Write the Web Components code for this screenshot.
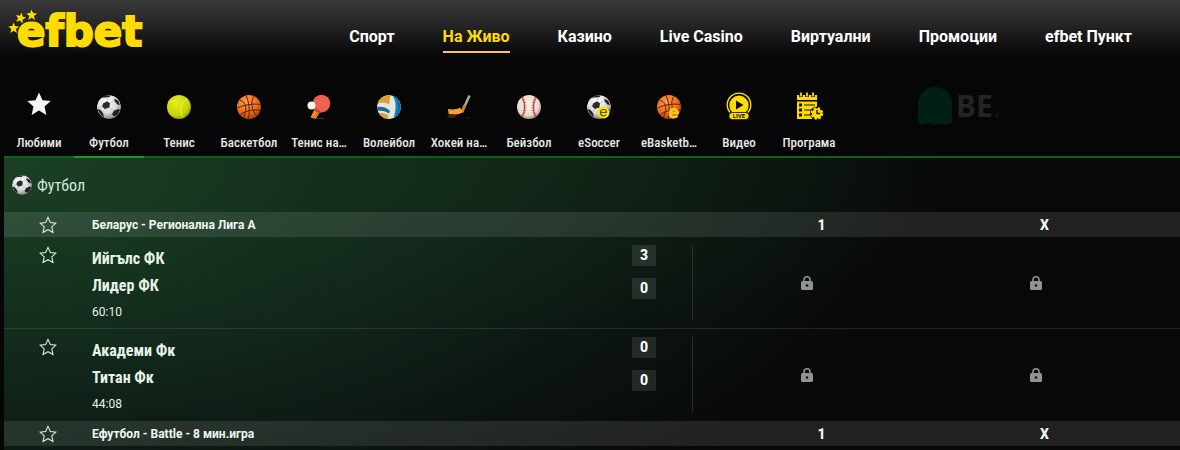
<!DOCTYPE html>
<html lang="bg">
<head>
<meta charset="utf-8">
<meta name="viewport" content="width=device-width, initial-scale=1">
<title>efbet - На Живо</title>
<style>
  html, body {
    height: 100%;
  }
  body {
    margin: 0;
    background: #060606;
    color: #f2f2f2;
    font-family: "Roboto Condensed", Roboto, "Liberation Sans", sans-serif;
    --wide: Roboto, "Liberation Sans", sans-serif;
    --brand: #ffdc00;
    --line: #0c5f1d;
  }
</style>
</head>
<body>

<live-page>
  <site-header slot="header">
    <brand-logo></brand-logo>
    <nav-link href="#sport">Спорт</nav-link>
    <nav-link href="#live" active>На Живо</nav-link>
    <nav-link href="#casino">Казино</nav-link>
    <nav-link href="#live-casino">Live Casino</nav-link>
    <nav-link href="#virtual">Виртуални</nav-link>
    <nav-link href="#promo">Промоции</nav-link>
    <nav-link href="#punkt">efbet Пункт</nav-link>
  </site-header>

  <sports-bar slot="sports">
    <sport-tab icon="star">Любими</sport-tab>
    <sport-tab icon="soccer" active>Футбол</sport-tab>
    <sport-tab icon="tennis">Тенис</sport-tab>
    <sport-tab icon="basketball">Баскетбол</sport-tab>
    <sport-tab icon="tabletennis">Тенис на…</sport-tab>
    <sport-tab icon="volleyball">Волейбол</sport-tab>
    <sport-tab icon="hockey">Хокей на…</sport-tab>
    <sport-tab icon="baseball">Бейзбол</sport-tab>
    <sport-tab icon="esoccer">eSoccer</sport-tab>
    <sport-tab icon="ebasketball">eBasketb…</sport-tab>
    <sport-tab icon="video">Видео</sport-tab>
    <sport-tab icon="schedule">Програма</sport-tab>
    <partner-mark slot="partner">BE</partner-mark>
  </sports-bar>

  <section-title icon="soccer">Футбол</section-title>
  <match-table></match-table>
</live-page>

<script>
const STAR = 'M12 1.8l3.1 6.9 7.4.8-5.5 5.1 1.6 7.4L12 18.3 5.4 22 7 14.6 1.5 9.5l7.4-.8z';

const SOCCER = `
  <radialGradient id="white" cx=".4" cy=".3" r=".75">
    <stop offset="0" stop-color="#fff"/><stop offset=".6" stop-color="#d9d9d9"/><stop offset="1" stop-color="#777"/>
  </radialGradient>
  <clipPath id="round"><circle cx="12" cy="12" r="12"/></clipPath>
  <g clip-path="url(#round)">
    <circle cx="12" cy="12" r="12" fill="url(#white)"/>
    <path d="M6 8.5l4-2.3 3 2-.6 4.4-4.6 1.4-2.6-2.6z" fill="#2b2b2b"/>
    <path d="M17.5 3.5l4 2.5 1.3 4-2.6-.5-2.8-3.5zM17 15.5l4.5-1.6 1.5 1-2.6 5-3.4 1.3-2-2zM3 14.5l3 3.6 1 4.4-4-3.5-2.4-4.6zM8 0l6 .4-2 1.8-4.5.2L4.5 3z" fill="#222"/>
    <path d="M10 6.2L11 2.4M13 8.2l4.3-2M12.4 12.6l4 3.2M7.8 14l-2 3.6M5.2 11.4L1 13M17.4 6l2.8 3.5 1 4.4M15 19.2l-4.5 3.4" stroke="#a8a8a8" stroke-width=".5" fill="none"/>
  </g>`;

const BASKET = `
  <radialGradient id="orange" cx=".4" cy=".3" r=".75">
    <stop offset="0" stop-color="#ff9c45"/><stop offset=".6" stop-color="#ee6c1b"/><stop offset="1" stop-color="#9c3a08"/>
  </radialGradient>
  <circle cx="12" cy="12" r="12" fill="url(#orange)"/>
  <path d="M.5 13C8 9.5 16 8.5 23.5 9.5M9 .5c3 6 4 15 2.5 23M2.5 5c6 1.5 8.5 7 4 17.5M17 1.3c-3.5 5-3 13 2.5 19.5M3.5 19.5c6-4 13-5.5 19.5-4" stroke="#56240a" stroke-width="1" fill="none"/>`;

const SPORT_ICONS = {
  star: `<path d="M12-2.5l3.5 7.700 8.300.8-6.300 5.600 1.900 8.400-7.400-4.400L4.600 20l1.900-8.400L.2 6l8.300-.8z" fill="#f4f4f4"/>`,
  soccer: SOCCER,
  tennis: `
    <radialGradient id="lime" cx=".4" cy=".35" r=".7">
      <stop offset="0" stop-color="#e4ee1c"/><stop offset=".7" stop-color="#c6d800"/><stop offset="1" stop-color="#8a9a00"/>
    </radialGradient>
    <circle cx="12" cy="12" r="12" fill="url(#lime)"/>
    <path d="M20 4c-5 2-8 10-4.500 18.500M1.500 7c4 .5 9-1.500 11-6" stroke="#e9f06a" stroke-width="1" fill="none"/>`,
  basketball: BASKET,
  tabletennis: `
    <path d="M8 13l5 4-4 7-5.500-1.500z" fill="#ee8a2c"/>
    <path d="M8.500 14l3.500 2.500-4.200 6.300" stroke="#b85c1c" fill="none"/>
    <ellipse cx="14.500" cy="8.500" rx="8.800" ry="8.800" fill="#f0604f"/>
    <path d="M7 12l8 5.400c-3 .8-6.500-.4-7.800-3z" fill="#c9402f"/>
    <circle cx="4.500" cy="10.500" r="4" fill="#fbf4ea"/>
    <path d="M10 23.500h7" stroke="#3a3a3a"/>`,
  volleyball: `
    <clipPath id="round"><circle cx="12" cy="12" r="12"/></clipPath>
    <g clip-path="url(#round)">
      <circle cx="12" cy="12" r="12" fill="#e6e6e0"/>
      <path d="M0 9C2 1 9-1 14 0c-1 3-2 6-1.500 9.500-3.500-2-8-2.500-12.500-.5z" fill="#dba12a"/>
      <path d="M15 0c4 5 5 13 1.500 23L24 20V2z" fill="#1780b4"/>
      <path d="M0 12c5-1 10 .5 13 4l-1 2.500C8 16 4 15.500 0 16z" fill="#1b6c9c"/>
      <path d="M1 18c4-.5 8 .5 10.500 2.500L11 24H4z" fill="#d7a63c"/>
      <path d="M19.500 2c3.500 5 3.500 13 .5 18" stroke="#0e5b86" stroke-width="1" fill="none"/>
    </g>`,
  hockey: `
    <path d="M22.500.5L15 17" stroke="#aea59c" stroke-width="2.600"/>
    <path d="M18 10L14.500 17.500" stroke="#d07c2a" stroke-width="2.800"/>
    <path d="M1 14c4 .8 8.500.6 11.800-1.200l3.200 3.400c-1.500 2.800-8 4.500-14.500 2.500z" fill="#fa9c2e"/>
    <ellipse cx="5" cy="21" rx="4.500" ry="1.800" fill="#3b2712"/>
    <circle cx="21" cy="23" r=".7" fill="#444"/>`,
  baseball: `
    <radialGradient id="cream" cx=".45" cy=".4" r=".65">
      <stop offset="0" stop-color="#fbf3ea"/><stop offset=".7" stop-color="#e6d8cb"/><stop offset="1" stop-color="#8c7a70"/>
    </radialGradient>
    <circle cx="12" cy="12" r="12" fill="url(#cream)"/>
    <path d="M5 2.500c3.500 5.500 3.500 13.500 0 19M19 2.500c-3.500 5.500-3.500 13.500 0 19" stroke="#c43b44" stroke-width="1.200" fill="none"/>
    <path d="M5.500 2.500c3.500 5.500 3.500 13.500 0 19M18.500 2.500c-3.500 5.500-3.500 13.500 0 19" stroke="#c43b44" stroke-width="2.600" stroke-dasharray=".8 1.800" fill="none"/>`,
  esoccer: `${SOCCER}
    <circle cx="16.500" cy="17.500" r="6" fill="#ffe100"/>
    <path d="M13.500 17.500h6c0-4-6-4-6 0 0 4 4 4 5.500 2" stroke="#5c4f00" stroke-width="1.200" fill="none"/>`,
  ebasketball: `${BASKET}
    <path d="M13 18h7.500c0-5-7.500-5-7.500 0 0 5 5 5 7.500 2.500" stroke="#ffc81a" stroke-width="2.800" fill="none"/>`,
  video: `
    <path d="M3 17.500A11.800 11.800 0 1 1 21 17.500" stroke="#ffdc00" stroke-width="1.300" fill="none"/>
    <path d="M5 17A9.700 9.700 0 1 1 19 17z" fill="#ffdc00"/>
    <path d="M9 5.500l7.500 4.500L9 14.500z" fill="#111"/>
    <rect x="2" y="17.500" width="20" height="7" rx="3.500" fill="#ffdc00" stroke="#060606" stroke-width=".6"/>
    <text x="12" y="23.300" text-anchor="middle" font-family="Roboto, sans-serif" font-weight="700" font-size="6" fill="#111">LIVE</text>`,
  schedule: `
    <path d="M0 0h20v5H0z" fill="#ffdc00"/>
    <path d="M4-2v4M10-2v4M16-2v4" stroke="#060606" stroke-width="3.600"/>
    <path d="M4-2.500v4M10-2.500v4M16-2.500v4" stroke="#ffdc00" stroke-width="1.800"/>
    <path d="M0 6.500h20v17.500H0z" fill="#ffdc00"/>
    <path d="M2 8.500h3v3H2zM2 13.500h3v3H2zM2 18.500h3v3H2z" fill="#111"/>
    <path d="M7 10h11M7 15h8M7 20h6" stroke="#111" stroke-width="1.200"/>
    <circle cx="20" cy="18.500" r="7" fill="#060606"/>
    <circle cx="20" cy="18.500" r="5" fill="#ffdc00"/>
    <circle cx="20" cy="18.500" r="5.400" fill="none" stroke="#ffdc00" stroke-width="1.800" stroke-dasharray="2.500 1.740"/>
    <path d="M20 15v3.500h3" stroke="#111" stroke-width="1.300" fill="none"/>`
};

class LivePage extends HTMLElement {
  constructor() {
    super();
    this.attachShadow({ mode: 'open' }).innerHTML = `
      <style>
        :host {
          display: flex;
          flex-direction: column;
          min-height: 100%;
        }
        main {
          flex: 1;
          margin-left: 4px;
          background:
            radial-gradient(ellipse 36% 60% at 46% 0, rgba(20, 52, 26, 0.35), transparent),
            radial-gradient(ellipse 82% 155% at 0 0, #1b4025 0%, #163520 24%, #11251a 50%, #0c140f 74%, #070807 100%);
        }
      </style>
      <slot name="header"></slot>
      <slot name="sports"></slot>
      <main><slot></slot></main>
    `;
  }
}

class SiteHeader extends HTMLElement {
  constructor() {
    super();
    this.attachShadow({ mode: 'open' }).innerHTML = `
      <style>
        :host {
          display: block;
          background: linear-gradient(#3a3a3a 0, #2b2b2b 18px, #080808 54px, #060606);
        }
        header {
          display: flex;
          align-items: flex-start;
          justify-content: space-between;
          height: 72px;
          padding: 0 48px 0 8px;
        }
        nav {
          display: flex;
          gap: 48px;
          padding-top: 25px;
        }
      </style>
      <header>
        <slot name="logo"></slot>
        <nav><slot></slot></nav>
      </header>
    `;
  }

  connectedCallback() {
    const logo = this.querySelector('brand-logo');
    if (logo) logo.slot = 'logo';
  }
}

class BrandLogo extends HTMLElement {
  constructor() {
    super();
    this.attachShadow({ mode: 'open' }).innerHTML = `
      <style>
        :host { display: block; }
        a { display: block; }
        svg { display: block; }
        text {
          font: bold 42px "DejaVu Sans", sans-serif;
          fill: var(--brand);
          stroke: var(--brand);
          stroke-width: 2;
        }
      </style>
      <a href="#home" aria-label="efbet">
        <svg width="140" height="56" viewBox="0 0 140 56">
          <text x="9" y="46">efbet</text>
          <g fill="#ffdc00" stroke="#1c1c1c" stroke-width=".8" paint-order="stroke">
            <path id="s" d="M-.5-5.500l1.600 3.600 4 .3-3.100 2.600 1 3.900L-.4 2.700-3.800 5l1.100-3.900L-5.800-1.500l4-.4z" transform="translate(6 28)"/>
            <path d="M-.5-5.500l1.600 3.600 4 .3-3.100 2.600 1 3.900L-.4 2.700-3.800 5l1.100-3.900L-5.800-1.500l4-.4z" transform="translate(13 18) rotate(15)"/>
            <path d="M-.5-5.500l1.600 3.600 4 .3-3.100 2.600 1 3.900L-.4 2.700-3.800 5l1.100-3.900L-5.800-1.500l4-.4z" transform="translate(24 15)"/>
          </g>
        </svg>
      </a>
    `;
  }
}

class NavLink extends HTMLElement {
  connectedCallback() {
    this.attachShadow({ mode: 'open' }).innerHTML = `
      <style>
        :host { display: block; }
        a {
          display: block;
          padding-bottom: 2px;
          border-bottom: 2px solid transparent;
          color: #fff;
          font: 700 16px/24px var(--wide);
          text-decoration: none;
          white-space: nowrap;
        }
        :host([active]) a {
          color: var(--brand);
          border-color: #fbc64f;
        }
      </style>
      <a href="${this.getAttribute('href')}"><slot></slot></a>
    `;
  }
}

class SportIcon extends HTMLElement {
  connectedCallback() {
    const size = this.getAttribute('size') || '24';
    this.attachShadow({ mode: 'open' }).innerHTML = `
      <style>
        :host { display: block; }
        svg { display: block; overflow: visible; }
      </style>
      <svg width="${size}" height="${size}" viewBox="0 0 24 24" aria-hidden="true">
        ${SPORT_ICONS[this.getAttribute('name')]}
      </svg>
    `;
  }
}

class SportsBar extends HTMLElement {
  constructor() {
    super();
    this.attachShadow({ mode: 'open' }).innerHTML = `
      <style>
        :host {
          display: block;
          margin-left: 4px;
        }
        nav {
          display: flex;
          align-items: stretch;
          border-bottom: 2px solid var(--line);
        }
      </style>
      <nav>
        <slot></slot>
        <slot name="partner"></slot>
      </nav>
    `;
  }
}

class SportTab extends HTMLElement {
  connectedCallback() {
    this.attachShadow({ mode: 'open' }).innerHTML = `
      <style>
        :host {
          display: block;
          flex: 0 0 70px;
        }
        a {
          display: flex;
          flex-direction: column;
          align-items: center;
          gap: 14px;
          height: 61px;
          padding-top: 23px;
          margin-bottom: -2px;
          border-bottom: 2px solid transparent;
          color: #e8e8e8;
          font-size: 13px;
          font-weight: 500;
          line-height: 20px;
          text-decoration: none;
          white-space: nowrap;
        }
        :host([active]) a { border-color: #15992b; }
      </style>
      <a href="#${this.getAttribute('icon')}">
        <sport-icon name="${this.getAttribute('icon')}"></sport-icon>
        <span><slot></slot></span>
      </a>
    `;
  }
}

class PartnerMark extends HTMLElement {
  constructor() {
    super();
    this.attachShadow({ mode: 'open' }).innerHTML = `
      <style>
        :host {
          display: flex;
          align-items: center;
          gap: 4px;
          margin-left: 74px;
          padding-bottom: 16px;
          color: #242424;
          font: bold 30px/40px "Noto Sans", sans-serif;
        }
        i {
          width: 4px;
          height: 4px;
          margin: 18px 0 0 -2px;
          background: #061711;
        }
      </style>
      <svg width="34" height="38" viewBox="0 0 34 38" aria-hidden="true">
        <path d="M0 36V15C2 5 9 0 17 0s15 5 17 15v21l-5 2-6-2-6 2-6-2-6 2z" fill="#021f16"/>
        <path d="M5 17l8 2M28 16l-7 3" stroke="#021a12"/>
      </svg>
      <span><slot></slot></span><i></i>
    `;
  }
}

class SectionTitle extends HTMLElement {
  connectedCallback() {
    this.attachShadow({ mode: 'open' }).innerHTML = `
      <style>
        :host { display: block; }
        h1 {
          display: flex;
          align-items: center;
          gap: 5px;
          height: 54px;
          margin: 0;
          padding-left: 8px;
          color: #d5e6d8;
          font-size: 16px;
          font-weight: 400;
        }
      </style>
      <h1><sport-icon name="${this.getAttribute('icon')}" size="20"></sport-icon><slot></slot></h1>
    `;
  }
}

class FavouriteButton extends HTMLElement {
  connectedCallback() {
    this.attachShadow({ mode: 'open' }).innerHTML = `
      <style>
        :host { display: block; }
        button {
          display: block;
          margin: 0 auto;
          padding: 0;
          border: 0;
          background: none;
          cursor: pointer;
        }
        svg { display: block; }
      </style>
      <button type="button" aria-label="${this.getAttribute('label')}" aria-pressed="false">
        <svg width="18" height="18" viewBox="0 0 24 24">
          <path d="${STAR}" fill="none" stroke="#e4efe6" stroke-width="1.400"/>
        </svg>
      </button>
    `;

    this.shadowRoot.querySelector('button').addEventListener('click', (e) => {
      const button = e.currentTarget;
      const on = button.getAttribute('aria-pressed') !== 'true';
      button.setAttribute('aria-pressed', on);
      button.querySelector('path').setAttribute('fill', on ? '#ffdc00' : 'none');
    });
  }
}

class LockIcon extends HTMLElement {
  constructor() {
    super();
    this.attachShadow({ mode: 'open' }).innerHTML = `
      <style>
        :host { display: block; }
        svg { display: block; margin: 0 auto; }
      </style>
      <svg width="12" height="14" viewBox="0 0 12 14" role="img" aria-label="Заключен">
        <path d="M3 6V3.800a3 3 0 0 1 6 0V6" fill="none" stroke="#929292" stroke-width="1.600"/>
        <rect y="5" width="12" height="9" rx="1.500" fill="#929292"/>
        <circle cx="6" cy="9.500" r="1.300" fill="#111"/>
      </svg>
    `;
  }
}

class MatchTable extends HTMLElement {
  connectedCallback() {
    const leagues = [
      {
        name: 'Беларус - Регионална Лига А',
        matches: [
          { home: 'Ийгълс ФК', away: 'Лидер ФК', time: '60:10', score: [3, 0] },
          { home: 'Академи Фк', away: 'Титан Фк', time: '44:08', score: [0, 0] }
        ]
      },
      { name: 'Ефутбол - Battle - 8 мин.игра', matches: [] }
    ];

    const rows = leagues.map(league => `
      <tbody>
        <tr class="league">
          <td><favourite-button label="${league.name}"></favourite-button></td>
          <th class="name" colspan="2" scope="rowgroup">${league.name}</th>
          <th class="one" scope="col">1</th>
          <th class="draw" scope="col">X</th>
          <td></td>
        </tr>
        ${league.matches.map(m => `
          <tr class="match">
            <td class="fav"><favourite-button label="${m.home} - ${m.away}"></favourite-button></td>
            <td class="teams">
              <div>${m.home}</div>
              <div>${m.away}</div>
              <time>${m.time}</time>
            </td>
            <td class="score"><span>${m.score[0]}</span><span>${m.score[1]}</span></td>
            <td class="first"><lock-icon></lock-icon></td>
            <td><lock-icon></lock-icon></td>
            <td></td>
          </tr>
        `).join('')}
      </tbody>
    `).join('');

    this.attachShadow({ mode: 'open' }).innerHTML = `
      <style>
        :host { display: block; }
        table {
          width: 100%;
          border-spacing: 0;
          table-layout: fixed;
        }
        td, th {
          box-sizing: border-box;
          padding: 0;
        }
        .col-fav { width: 88px; }
        .col-score { width: 60px; }
        .col-odd { width: 229px; }
        .col-end { width: 30px; }
        .league td, .league th {
          height: 25px;
          background: rgba(255, 255, 255, 0.1);
          color: #f0f7f1;
          font: 800 14px/24px var(--wide);
        }
        .league .name {
          padding-top: 1px;
          font-size: 12px;
          font-weight: 700;
          text-align: left;
        }
        .league .one { padding-left: 30px; }
        .league .draw { padding-left: 18px; }
        .match td {
          height: 92px;
          border-bottom: 1px solid rgba(255, 255, 255, 0.1);
        }
        .match:last-child td { border-bottom-color: transparent; }
        .match .fav {
          padding-top: 9px;
          vertical-align: top;
        }
        .match .teams {
          padding-top: 8px;
          vertical-align: top;
          color: #e6f3e8;
          font-size: 16px;
          font-weight: 700;
          line-height: 27px;
        }
        time {
          display: block;
          font-size: 12px;
          font-weight: 400;
          font-family: var(--wide);
        }
        .match .first {
          background: linear-gradient(rgba(255, 255, 255, 0.12), rgba(255, 255, 255, 0.12)) left center / 1px 75px no-repeat;
        }
        .score { vertical-align: top; }
        .score span {
          display: block;
          width: 24px;
          margin: 8px 0 12px;
          background: rgba(255, 255, 255, 0.1);
          color: #fff;
          font: 800 14px/21px var(--wide);
          text-align: center;
        }
      </style>
      <table>
        <colgroup>
          <col class="col-fav"><col><col class="col-score">
          <col class="col-odd"><col class="col-odd"><col class="col-end">
        </colgroup>
        ${rows}
      </table>
    `;
  }
}

customElements.define('live-page', LivePage);
customElements.define('site-header', SiteHeader);
customElements.define('brand-logo', BrandLogo);
customElements.define('nav-link', NavLink);
customElements.define('sport-icon', SportIcon);
customElements.define('sports-bar', SportsBar);
customElements.define('sport-tab', SportTab);
customElements.define('partner-mark', PartnerMark);
customElements.define('section-title', SectionTitle);
customElements.define('favourite-button', FavouriteButton);
customElements.define('lock-icon', LockIcon);
customElements.define('match-table', MatchTable);
</script>
</body>
</html>
